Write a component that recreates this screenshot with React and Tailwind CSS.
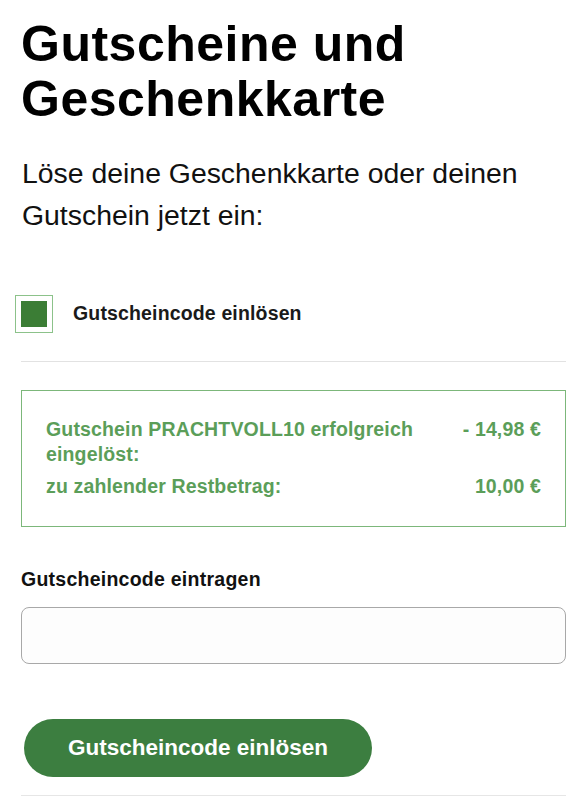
import React, { useState } from 'react';

export default function App() {
  const [checked, setChecked] = useState(true);
  const [code, setCode] = useState('');

  return (
    <div className="min-h-screen bg-white pl-[21px] pr-[20px] text-black font-['Liberation_Sans',Arial,sans-serif]">
      {/* Überschrift */}
      <h1 className="pt-[17px] text-[50px] leading-[55px] font-bold tracking-[0.5px]">
        Gutscheine und Geschenkkarte
      </h1>
      <p className="mt-[25px] pl-px text-[28.4px] leading-[42px] text-[#111]">
        Löse deine Geschenkkarte oder deinen Gutschein jetzt ein:
      </p>

      {/* Checkbox */}
      <label className="mt-[59px] -ml-[6px] flex items-center gap-[20px] cursor-pointer">
        <span
          className="flex h-[38px] w-[38px] items-center justify-center border border-[#8cc28a] bg-white"
          onClick={() => setChecked(!checked)}
        >
          {checked && <span className="block h-[26px] w-[26px] bg-[#3b7d35]" />}
        </span>
        <span className="text-[19.5px] tracking-[0.15px] font-bold text-[#1a1a1a]">Gutscheincode einlösen</span>
      </label>

      <div className="mt-[28px] h-px bg-[#e2e2e2]" />

      {/* Erfolgsmeldung */}
      <div className="mt-[28px] border border-[#7cb77a] px-[24px] pt-[26px] pb-[27px] text-[19.5px] leading-[25px] tracking-[0.15px] font-bold text-[#5b9e59]">
        <div className="flex justify-between gap-6">
          <span className="max-w-[385px]">Gutschein PRACHTVOLL10 erfolgreich eingelöst:</span>
          <span className="whitespace-nowrap">- 14,98 €</span>
        </div>
        <div className="mt-[7px] flex justify-between gap-6">
          <span>zu zahlender Restbetrag:</span>
          <span className="whitespace-nowrap">10,00 €</span>
        </div>
      </div>

      {/* Eingabe */}
      <div className="mt-[40px] text-[19.5px] leading-[25px] tracking-[0.25px] font-bold text-[#111]">Gutscheincode eintragen</div>
      <input
        value={code}
        onChange={(e) => setCode(e.target.value)}
        className="mt-[15px] block h-[57px] w-full rounded-[8px] border border-[#a8a8a8] bg-[#fdfdfd] px-4 text-[19px] outline-none"
      />

      <button className="mt-[55px] ml-[3px] flex h-[58px] w-[348px] items-center justify-center rounded-full bg-[#3c7e40] text-[22.5px] font-bold text-white">
        Gutscheincode einlösen
      </button>

      <div className="mt-[18px] h-px bg-[#e6e6e6]" />
    </div>
  );
}
